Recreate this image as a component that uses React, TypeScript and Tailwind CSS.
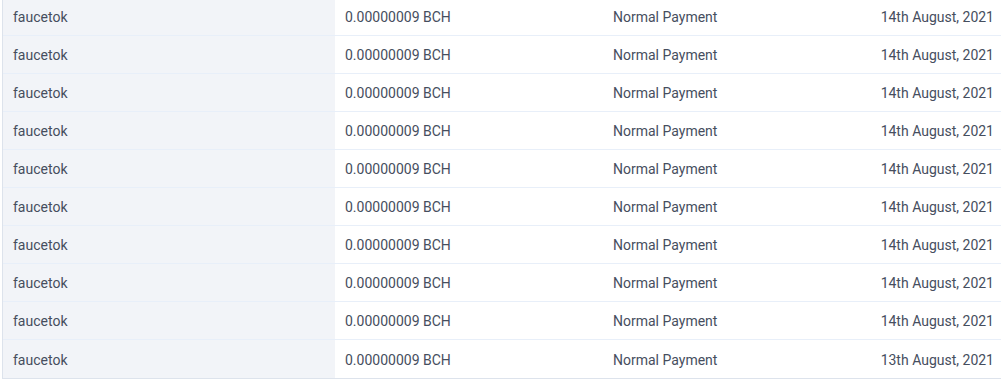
const rows = [
  "14th August, 2021",
  "14th August, 2021",
  "14th August, 2021",
  "14th August, 2021",
  "14th August, 2021",
  "14th August, 2021",
  "14th August, 2021",
  "14th August, 2021",
  "14th August, 2021",
  "13th August, 2021",
];

export default function App() {
  return (
    <div className="w-[1001px] h-[379px] overflow-hidden bg-white" style={{ fontFamily: "Roboto, 'Liberation Sans', sans-serif" }}>
      <div className="-mt-[2px] ml-[2px] border-l border-b border-[#dde3ec] text-[14px] text-[#464e5e]">
        {rows.map((date, i) => (
          <div key={i} className="flex h-[38px] items-stretch border-b border-[#e8eff9] last:border-b-0">
            <div className="w-[332px] flex items-center pt-[2px] pl-[10px] bg-[#f2f4f8]">faucetok</div>
            <div className="w-[276px] flex items-center pt-[2px] pl-[10px]">0.00000009 BCH</div>
            <div className="flex-1 flex items-center pt-[2px] pl-[2px]">Normal Payment</div>
            <div className="flex items-center pt-[2px] pr-[7px] text-right">{date}</div>
          </div>
        ))}
      </div>
    </div>
  );
}
